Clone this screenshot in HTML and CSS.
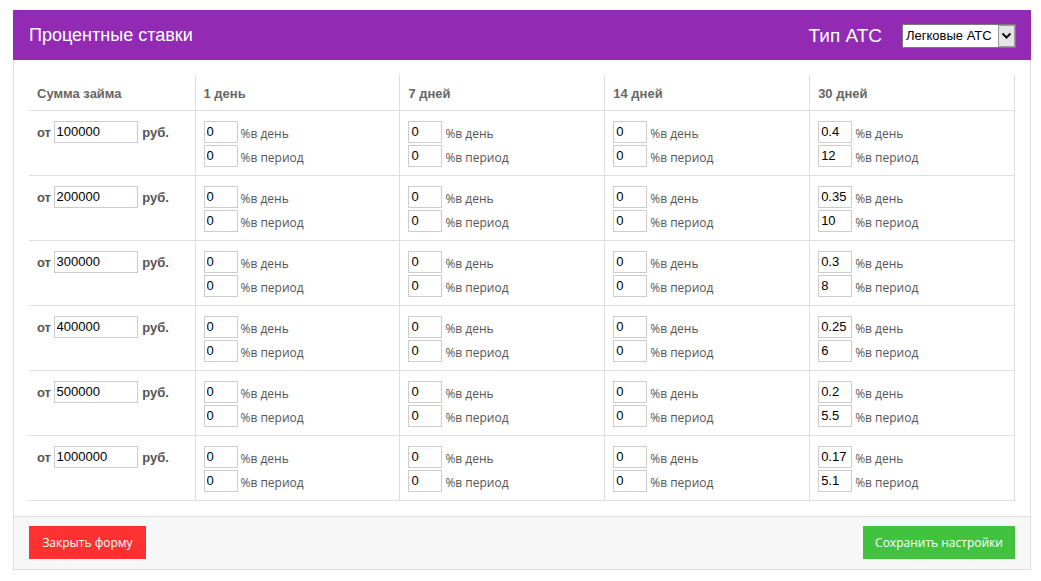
FILE: index.html
```html
<!DOCTYPE html>
<html lang="ru">
<head>
    <meta charset="UTF-8">
    <title>Процентные ставки</title>
    <link rel="stylesheet" href="styles.css">
</head>
<body>
    <div class="panel">
        <div class="panel-head">
            <div class="panel-title">Процентные ставки</div>
            <div class="type-box">
                <span class="type-label">Тип АТС</span>
                <div class="select-wrap">
                    <select class="type-select">
                        <option>Легковые АТС</option>
                        <option>Грузовые АТС</option>
                    </select>
                    <span class="select-arrow">
                        <svg width="11" height="8" viewBox="0 0 11 8"><path d="M1.5 1.5 L5.5 5.5 L9.5 1.5" fill="none" stroke="#111" stroke-width="2"/></svg>
                    </span>
                </div>
            </div>
        </div>

        <div class="panel-body">
            <table class="rates">
                <thead>
                    <tr>
                        <th>Сумма займа</th>
                        <th>1 день</th>
                        <th>7 дней</th>
                        <th>14 дней</th>
                        <th>30 дней</th>
                    </tr>
                </thead>
                <tbody id="rows"></tbody>
            </table>
        </div>

        <div class="panel-foot">
            <button class="btn btn-close">Закрыть форму</button>
            <button class="btn btn-save">Сохранить настройки</button>
        </div>
    </div>

    <script>
        var rows = [
            ['100000', '0.4', '12'],
            ['200000', '0.35', '10'],
            ['300000', '0.3', '8'],
            ['400000', '0.25', '6'],
            ['500000', '0.2', '5.5'],
            ['1000000', '0.17', '5.1']
        ];

        function rateCell(day, period) {
            return '<td>' +
                '<div class="rate-line"><input class="rate" value="' + day + '"><span>%в день</span></div>' +
                '<div class="rate-line"><input class="rate" value="' + period + '"><span>%в период</span></div>' +
                '</td>';
        }

        var html = '';
        rows.forEach(function (r) {
            html += '<tr>' +
                '<td class="sum"><b>от</b> <input class="amount" value="' + r[0] + '"> <b>руб.</b></td>' +
                rateCell('0', '0') + rateCell('0', '0') + rateCell('0', '0') +
                rateCell(r[1], r[2]) +
                '</tr>';
        });
        document.getElementById('rows').innerHTML = html;
    </script>
</body>
</html>
```

FILE: styles.css
```css
body {
    margin: 0;
    padding: 10px 11px 0 13px;
    font-family: "Liberation Sans", Arial, sans-serif;
    background: #fff;
}

.panel {
    width: 1016px;
    border: 1px solid #ddd;
    border-top: none;
}

/* Шапка */
.panel-head {
    height: 50px;
    margin: 0 -1px;
    background: #922ab4;
    color: #fff;
    display: flex;
    align-items: center;
    justify-content: space-between;
    padding: 0 15px 0 16px;
}

.panel-title {
    font-size: 18px;
}

.type-box {
    display: flex;
    align-items: center;
    padding-top: 1px;
}

.type-label {
    font-size: 19px;
    margin-right: 20px;
}

.select-wrap {
    display: flex;
    height: 24px;
    width: 114px;
    box-sizing: border-box;
    border: 1px solid #7a7a7a;
    background: #fff;
}

.type-select {
    appearance: none;
    -webkit-appearance: none;
    border: none;
    outline: none;
    background: #fff;
    font-family: "Liberation Sans", Arial, sans-serif;
    font-size: 13px;
    color: #000;
    padding: 0 0 0 3px;
    width: 95px;
}

.select-arrow {
    width: 17px;
    box-sizing: border-box;
    border: 1px solid #9a9a9a;
    background: #e4e4e4;
    display: flex;
    align-items: center;
    justify-content: center;
}

/* Таблица */
.panel-body {
    padding: 15px;
}

.rates {
    width: 100%;
    border-collapse: collapse;
    table-layout: fixed;
}

.rates th {
    height: 35px;
    padding: 2px 8px 0 8px;
    text-align: left;
    font-size: 13px;
    font-weight: bold;
    color: #666;
    border-left: 1px solid #ddd;
    border-bottom: 1px solid #ddd;
    box-sizing: border-box;
}

.rates th:first-child {
    width: 166px;
    border-left: none;
}

.rates th:last-child,
.rates td:last-child {
    border-right: 1px solid #ddd;
}

.rates td {
    height: 65px;
    padding: 10px 8px 0 8px;
    vertical-align: top;
    border-left: 1px solid #ddd;
    border-bottom: 1px solid #ddd;
    box-sizing: border-box;
    font-family: "Open Sans", sans-serif;
    font-size: 12px;
    color: #555;
}

.rates td.sum {
    border-left: none;
    font-family: "Liberation Sans", Arial, sans-serif;
    font-size: 13px;
    color: #555;
    padding-top: 11px;
}

.rates td.sum b {
    position: relative;
    top: 3px;
}

.amount {
    width: 84px;
    height: 22px;
    box-sizing: border-box;
    border: 1px solid #ccc;
    font-family: "Liberation Sans", Arial, sans-serif;
    font-size: 13px;
    padding: 0 2px;
    color: #000;
    margin: 0 1px 0 -1px;
    vertical-align: top;
    position: relative;
    top: -1px;
}

.rate-line {
    display: flex;
    align-items: center;
    height: 22px;
    margin-bottom: 2px;
}

.rate {
    width: 34px;
    height: 22px;
    box-sizing: border-box;
    border: 1px solid #ccc;
    font-family: "Liberation Sans", Arial, sans-serif;
    font-size: 13px;
    padding: 0 2px;
    color: #000;
    margin-right: 3px;
}

.rate-line span {
    padding-top: 3px;
}

/* Подвал */
.panel-foot {
    background: #f7f7f7;
    border-top: 1px solid #ddd;
    padding: 9px 15px 10px 15px;
    display: flex;
    justify-content: space-between;
}

.btn {
    height: 33px;
    border: none;
    color: #fff;
    font-family: "Open Sans", sans-serif;
    font-size: 12px;
    padding: 0 12px;
    white-space: nowrap;
    cursor: pointer;
}

.btn-close {
    background: #fd3131;
    width: 117px;
}

.btn-save {
    background: #41c33f;
    width: 152px;
}
```
